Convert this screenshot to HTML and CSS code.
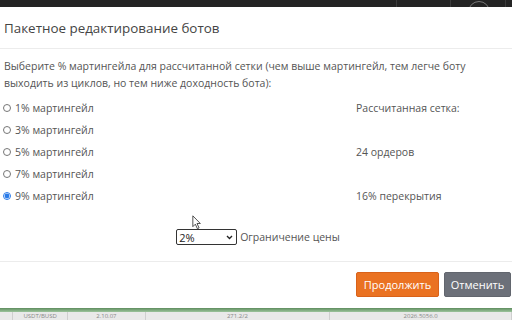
FILE: index.html
```html
<!DOCTYPE html>
<html lang="ru">
<head>
<meta charset="utf-8">
<link rel="stylesheet" href="styles.css">
</head>
<body>
<div class="topbar">
  <span class="tb-sep s1"></span>
  <span class="tb-sep s2"></span>
  <span class="tb-sep s3"></span>
  <span class="tb-circle"></span>
</div>
<div class="modal">
  <div class="modal-header">Пакетное редактирование ботов</div>
  <div class="modal-body">
    <p class="intro">Выберите % мартингейла для рассчитанной сетки (чем выше мартингейл, тем легче боту выходить из циклов, но тем ниже доходность бота):</p>
    <div class="grid">
      <label class="opt"><input type="radio" name="m"> 1% мартингейл</label>
      <div class="info">Рассчитанная сетка:</div>
      <label class="opt"><input type="radio" name="m"> 3% мартингейл</label>
      <div class="info"></div>
      <label class="opt"><input type="radio" name="m"> 5% мартингейл</label>
      <div class="info">24 ордеров</div>
      <label class="opt"><input type="radio" name="m"> 7% мартингейл</label>
      <div class="info"></div>
      <label class="opt"><input type="radio" name="m" checked> 9% мартингейл</label>
      <div class="info">16% перекрытия</div>
    </div>
    <div class="limit">
      <span class="select">2%<svg class="chev" viewBox="0 0 8 6" width="7" height="5"><path d="M1 1.2 L4 4.2 L7 1.2" fill="none" stroke="#222" stroke-width="1.6"/></svg></span>
      <span class="limit-label">Ограничение цены</span>
    </div>
    <svg class="cursor" viewBox="0 0 12 18" width="10" height="15"><path d="M1 1 L1 14 L4 11 L6.5 16.5 L8.5 15.5 L6 10.2 L10 10.2 Z" fill="#fff" stroke="#333" stroke-width="1"/></svg>
  </div>
  <div class="modal-footer">
    <button class="btn btn-primary">Продолжить</button>
    <button class="btn btn-secondary">Отменить</button>
  </div>
</div>
<div class="under">
  <div class="green"></div>
  <div class="row">
    <span class="cell c0"></span>
    <span class="cell c1">USDT/BUSD</span>
    <span class="cell c2">2.10.07</span>
    <span class="cell c3">271.2/2</span>
    <span class="cell c4">2026.5056.0</span>
  </div>
</div>
</body>
</html>
```
FILE: styles.css
```css
html, body {
  margin: 0;
  padding: 0;
  background: #fff;
  width: 512px;
  height: 320px;
  overflow: hidden;
  font-family: "Open Sans", "Noto Sans", sans-serif;
}
.topbar {
  height: 7px;
  background: #242424;
  position: relative;
  overflow: hidden;
}
.tb-sep {
  position: absolute;
  top: 0;
  width: 1px;
  height: 7px;
  background: #3c3c3c;
}
.s1 { left: 396px; }
.s2 { left: 450px; }
.s3 { left: 505px; }
.tb-circle {
  position: absolute;
  left: 468px;
  top: 1px;
  width: 20px;
  height: 20px;
  border: 1px solid #777;
  border-radius: 50%;
}
.modal {
  background: #fff;
  color: #555;
}
.modal-header {
  border-bottom: 1px solid #ececec;
  font-size: 13.4px;
  color: #444;
  padding-left: 4px;
  display: flex;
  align-items: center;
  padding-top: 1px;
  box-sizing: border-box;
  height: 42px;
}
.modal-body {
  position: relative;
  height: 212px;
  box-sizing: border-box;
  padding: 9px 0 0 4px;
  font-size: 10.5px;
}
.intro {
  margin: 0 0 5px 0;
  line-height: 17px;
  color: #555;
}
.grid {
  display: grid;
  grid-template-columns: 354px 1fr;
  grid-auto-rows: 22px;
  margin-left: -2px;
}
.opt, .info {
  display: flex;
  align-items: center;
  color: #555;
}
.opt input {
  width: 8px;
  height: 8px;
  margin: 0 4px 0 1px;
  accent-color: #2a7be8;
}
.limit {
  display: flex;
  justify-content: center;
  align-items: center;
  margin-top: 22px;
  margin-left: 0;
  gap: 3px;
}
.select {
  width: 61px;
  height: 16px;
  box-sizing: border-box;
  border: 1px solid #333;
  border-radius: 2px;
  display: flex;
  align-items: center;
  justify-content: space-between;
  padding: 0 3px 0 2px;
  color: #222;
  font-size: 11px;
}
.limit-label {
  color: #555;
}
.cursor {
  position: absolute;
  left: 192px;
  top: 166px;
}
.modal-footer {
  border-top: 1px solid #ececec;
  height: 47px;
  box-sizing: border-box;
  display: flex;
  justify-content: flex-end;
  align-items: flex-start;
  padding-top: 10px;
  padding-right: 1px;
  gap: 5px;
}
.btn {
  font-family: "Open Sans", "Noto Sans", sans-serif;
  font-size: 11px;
  color: #fff;
  height: 25px;
  border-radius: 2px;
  padding: 0;
  cursor: pointer;
}
.btn-primary {
  width: 83px;
  background: #ea7222;
  border: 1px solid #d9621a;
}
.btn-secondary {
  width: 67px;
  background: #6c7079;
  border: 1px solid #62666e;
}
.under {
  height: 12px;
  overflow: hidden;
}
.green {
  height: 4px;
  background: linear-gradient(#5f8d5f, #9cc49c);
}
.row {
  height: 8px;
  background: #e9e9e9;
  display: flex;
  font-size: 6px;
  color: #888;
  line-height: 8px;
  white-space: nowrap;
}
.cell {
  border-right: 1px solid #cfcfcf;
  height: 8px;
  box-sizing: border-box;
  text-align: center;
}
.c0 { width: 14px; }
.c1 { width: 59px; }
.c2 { width: 83px; }
.c3 { width: 198px; }
.c4 { width: 195px; }
```
